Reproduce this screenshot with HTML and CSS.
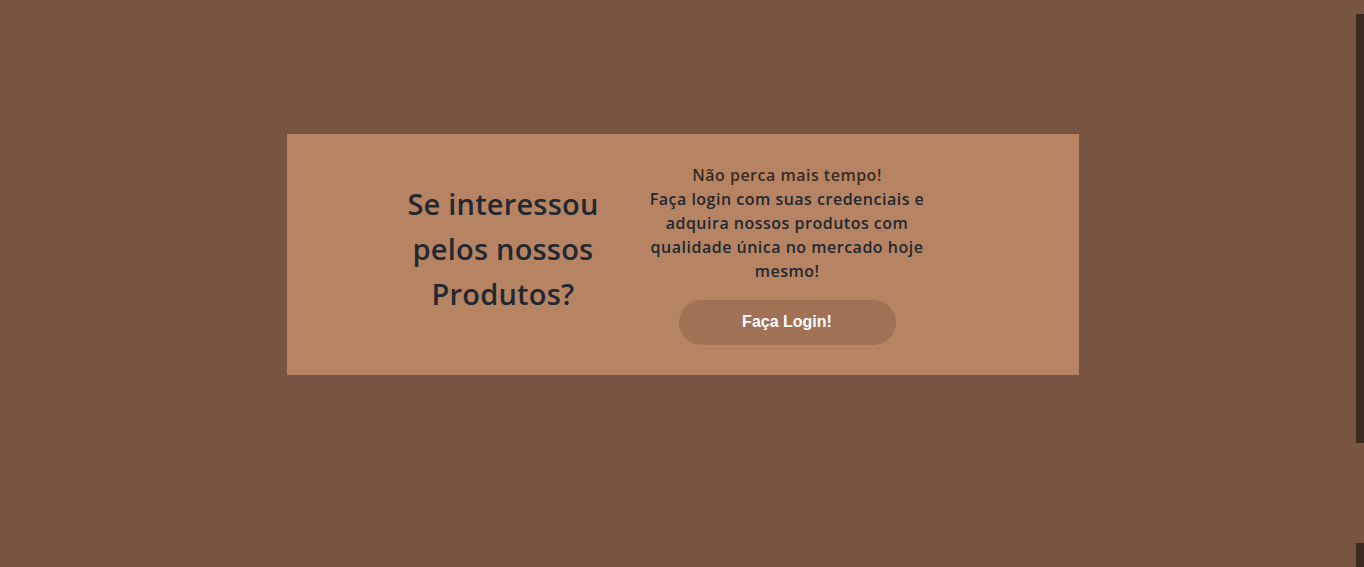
FILE: index.html
```html
<!DOCTYPE html>
<html lang="pt-BR">
<head>
<meta charset="utf-8">
<title>Login</title>
<link rel="stylesheet" href="styles.css">
</head>
<body>
<main class="page">
  <section class="cta">
    <div class="cta-left">
      <h2 class="cta-title">Se interessou pelos nossos Produtos?</h2>
    </div>
    <div class="cta-right">
      <p class="cta-text"><span class="cta-lead">Não perca mais tempo!</span><br>Faça login com suas credenciais e adquira nossos produtos com qualidade única no mercado hoje mesmo!</p>
      <a class="cta-btn" href="#">Faça Login!</a>
    </div>
  </section>
</main>
<div class="edge edge-top"></div>
<div class="edge edge-bottom"></div>
</body>
</html>
```
FILE: styles.css
```css
html, body {
  margin: 0;
  padding: 0;
  height: 100%;
  background: #785541;
  overflow: hidden;
}
.page {
  display: flex;
  justify-content: center;
  padding-top: 134px;
  padding-left: 2px;
}
.cta {
  width: 792px;
  height: 241px;
  background: #b78463;
  display: flex;
  align-items: center;
  box-sizing: border-box;
  padding-left: 108px;
  padding-top: 8px;
  font-family: "Open Sans", "Noto Sans", sans-serif;
  color: #222831;
}
.cta-left {
  width: 216px;
  display: flex;
  justify-content: center;
  margin-top: -20px;
}
.cta-title {
  margin: 0;
  width: 210px;
  text-align: center;
  font-size: 29px;
  font-weight: 600;
  letter-spacing: 0.2px;
  line-height: 45px;
}
.cta-right {
  width: 310px;
  margin-left: 21px;
  margin-top: -10px;
  display: flex;
  flex-direction: column;
  align-items: center;
}
.cta-text {
  margin: 0 0 17px;
  text-align: center;
  font-size: 16px;
  font-weight: 600;
  letter-spacing: 0.5px;
  line-height: 24px;
  width: 296px;
}
.cta-lead {
  color: #3a2a21;
}
.cta-btn {
  display: flex;
  align-items: center;
  justify-content: center;
  width: 217px;
  height: 45px;
  border-radius: 23px;
  background: #a07155;
  color: #fff;
  font-family: "Liberation Sans", Arial, sans-serif;
  font-weight: 700;
  font-size: 16px;
  text-decoration: none;
}
.edge {
  position: fixed;
  right: 0;
  width: 8px;
  background: #3a2a20;
}
.edge-top {
  top: 14px;
  height: 429px;
}
.edge-bottom {
  top: 543px;
  bottom: 0;
}
```
